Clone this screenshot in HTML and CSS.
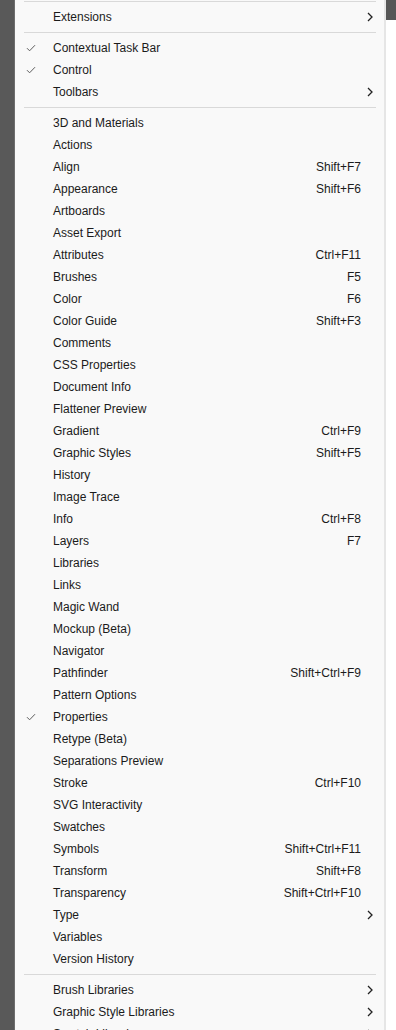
FILE: index.html
```
<!DOCTYPE html>
<html lang="en">
<head>
  <meta charset="UTF-8" />
  <title>Window menu</title>
  <link rel="stylesheet" href="styles.css">
</head>
<body>
  <div class="backdrop"></div>

  <div class="menu" id="menu">
    <div class="sep top"></div>
    <div class="item sub"><span class="check"></span><span class="label">Extensions</span><span class="key"></span><span class="arrow"></span></div>
    <div class="sep"></div>
    <div class="item on"><span class="check"></span><span class="label">Contextual Task Bar</span><span class="key"></span><span class="arrow"></span></div>
    <div class="item on"><span class="check"></span><span class="label">Control</span><span class="key"></span><span class="arrow"></span></div>
    <div class="item sub"><span class="check"></span><span class="label">Toolbars</span><span class="key"></span><span class="arrow"></span></div>
    <div class="sep"></div>
    <div id="panels"></div>
    <div class="sep"></div>
    <div class="item sub"><span class="check"></span><span class="label">Brush Libraries</span><span class="key"></span><span class="arrow"></span></div>
    <div class="item sub"><span class="check"></span><span class="label">Graphic Style Libraries</span><span class="key"></span><span class="arrow"></span></div>
    <div class="item sub"><span class="check"></span><span class="label">Swatch Libraries</span><span class="key"></span><span class="arrow"></span></div>
  </div>

  <div class="aside">
    <div class="aside-top"></div>
  </div>

  <script>
    // panel list: [name, shortcut, flag]  flag: "on" = checked, "sub" = has submenu
    const panels = [
      ["3D and Materials"], ["Actions"], ["Align", "Shift+F7"], ["Appearance", "Shift+F6"],
      ["Artboards"], ["Asset Export"], ["Attributes", "Ctrl+F11"], ["Brushes", "F5"],
      ["Color", "F6"], ["Color Guide", "Shift+F3"], ["Comments"], ["CSS Properties"],
      ["Document Info"], ["Flattener Preview"], ["Gradient", "Ctrl+F9"], ["Graphic Styles", "Shift+F5"],
      ["History"], ["Image Trace"], ["Info", "Ctrl+F8"], ["Layers", "F7"],
      ["Libraries"], ["Links"], ["Magic Wand"], ["Mockup (Beta)"],
      ["Navigator"], ["Pathfinder", "Shift+Ctrl+F9"], ["Pattern Options"], ["Properties", "", "on"],
      ["Retype (Beta)"], ["Separations Preview"], ["Stroke", "Ctrl+F10"], ["SVG Interactivity"],
      ["Swatches"], ["Symbols", "Shift+Ctrl+F11"], ["Transform", "Shift+F8"], ["Transparency", "Shift+Ctrl+F10"],
      ["Type", "", "sub"], ["Variables"], ["Version History"]
    ];
    const box = document.getElementById("panels");
    panels.forEach(([name, key = "", flag = ""]) => {
      const row = document.createElement("div");
      row.className = "item" + (flag ? " " + flag : "");
      row.innerHTML = `<span class="check"></span><span class="label">${name}</span><span class="key">${key}</span><span class="arrow"></span>`;
      box.appendChild(row);
    });

    // icons
    const tick = '<svg width="10" height="8" viewBox="0 0 10 8"><path d="M1 4.2 L3.6 6.8 L9 1.2" fill="none" stroke="#5c5c5c" stroke-width="1"/></svg>';
    const chev = '<svg width="6" height="10" viewBox="0 0 6 10"><path d="M1 1 L5 5 L1 9" fill="none" stroke="#222" stroke-width="1.3"/></svg>';
    document.querySelectorAll(".item.on .check").forEach(el => el.innerHTML = tick);
    document.querySelectorAll(".item.sub .arrow").forEach(el => el.innerHTML = chev);
  </script>
</body>
</html>
```

FILE: styles.css
```
html, body {
  height: 100%;
}
body {
  margin: 0;
  display: flex;
  overflow: hidden;
  background: #ffffff;
  font-family: "Liberation Sans", "Noto Sans", sans-serif;
  font-size: 12px;
  color: #1b1b1b;
}
.backdrop {
  width: 15px;
  flex-shrink: 0;
  background: #595959;
  border-right: 1px solid #6e6e6e;
  box-sizing: border-box;
}
.menu {
  width: 371px;
  flex-shrink: 0;
  background: #f9f9f9;
  border-right: 2px solid #e6e6e6;
  box-sizing: border-box;
}
.aside {
  flex-grow: 1;
  background: #ffffff;
}
.aside-top {
  height: 20px;
  background: #565656;
}
.item {
  display: grid;
  grid-template-columns: 38px 1fr auto 23px;
  align-items: center;
  height: 22px;
}
.check {
  display: flex;
  justify-content: flex-end;
  padding-right: 17px;
}
.check svg {
  display: block;
}
.label {
  white-space: nowrap;
}
.key {
  white-space: nowrap;
  text-align: right;
}
.arrow {
  padding-left: 6px;
  display: flex;
}
.arrow svg {
  display: block;
}
.sep {
  padding: 4px 0;
  margin: 0 8px 0 9px;
}
.sep::after {
  content: "";
  display: block;
  height: 1px;
  background: #d9d9d9;
}
.sep.top {
  padding: 1px 0 4px;
}
```
